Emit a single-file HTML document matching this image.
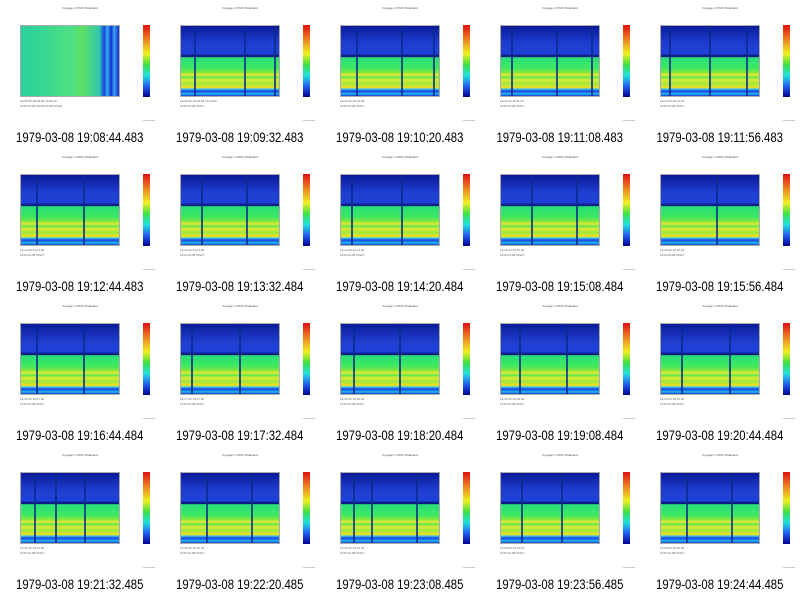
<!DOCTYPE html>
<html><head><meta charset="utf-8"><style>
*{margin:0;padding:0}
body{width:800px;height:596px;background:#fff;position:relative;overflow:hidden;font-family:"Liberation Sans",sans-serif}
.c{position:absolute;width:160px;height:149px}
.t{position:absolute;left:0;top:6px;width:160px;text-align:center;font-size:3px;color:#555}
.p{position:absolute;left:20px;top:25px;width:100px;height:72px;border:1px solid #aaa;box-sizing:border-box;
background:linear-gradient(to bottom,#0a1a9a 0%,#1f3fd0 25%,#1e40d8 40%,#0a1f80 42%,#0a1f80 44%,#28e07a 45%,#3ee860 60%,#7fe840 66%,#e8e830 70%,#5ee850 73%,#e0e830 77%,#9fe840 82%,#f0e020 88%,#3cc8f0 90%,#1a40e0 93%,#1fb8f0 97%,#1a3ad0 100%)}
.p.f{background:linear-gradient(to right,#2ad0a0 0%,#50e080 55%,#60e060 62%,#30c8b0 80%,#1a40e0 85%,#30b0f0 88%,#1030d0 92%,#40a0f0 95%,#1030d0 100%)}
.v{position:absolute;top:0;width:2px;height:100%;background:#0a2a8a;opacity:.8}
.b{position:absolute;left:143px;top:25px;width:7px;height:72px;background:linear-gradient(to bottom,#e01010,#f08020 20%,#f0f020 40%,#40e040 55%,#20e0e0 70%,#2060f0 85%,#000090)}
.x{position:absolute;left:20px;top:99px;width:110px;font-size:3px;color:#666;line-height:5px}
.s{position:absolute;left:143px;top:120px;width:12px;height:1px;background:#ccc}
.l{position:absolute;left:0;top:129px;width:160px;text-align:center;font-size:14px;color:#000;transform:scaleX(0.81);transform-origin:78.5px 0}
</style></head><body>
<div class="c" style="left:0;top:0"><div class="t">Voyager-1 PWS Wideband</div><div class="p f"></div><div class="b"></div><div class="x">18:08:50 18:09:00 18:09:10<br>1979-03-08 19:08:44.483 SCET</div><div class="s"></div><div class="l">1979-03-08 19:08:44.483</div></div>
<div class="c" style="left:160px;top:0"><div class="t">Voyager-1 PWS Wideband</div><div class="p"><div class="v" style="left:13px"></div><div class="v" style="left:63px"></div><div class="v" style="left:93px"></div></div><div class="b"></div><div class="x">19:09:40 19:09:50 19:10:00<br>1979-03-08 SCET</div><div class="s"></div><div class="l">1979-03-08 19:09:32.483</div></div>
<div class="c" style="left:320px;top:0"><div class="t">Voyager-1 PWS Wideband</div><div class="p"><div class="v" style="left:15px"></div><div class="v" style="left:60px"></div><div class="v" style="left:92px"></div></div><div class="b"></div><div class="x">19:10:30 19:10:40<br>1979-03-08 SCET</div><div class="s"></div><div class="l">1979-03-08 19:10:20.483</div></div>
<div class="c" style="left:480px;top:0"><div class="t">Voyager-1 PWS Wideband</div><div class="p"><div class="v" style="left:10px"></div><div class="v" style="left:55px"></div><div class="v" style="left:90px"></div></div><div class="b"></div><div class="x">19:11:10 19:11:20<br>1979-03-08 SCET</div><div class="s"></div><div class="l">1979-03-08 19:11:08.483</div></div>
<div class="c" style="left:640px;top:0"><div class="t">Voyager-1 PWS Wideband</div><div class="p"><div class="v" style="left:8px"></div><div class="v" style="left:48px"></div><div class="v" style="left:85px"></div></div><div class="b"></div><div class="x">19:12:00 19:12:10<br>1979-03-08 SCET</div><div class="s"></div><div class="l">1979-03-08 19:11:56.483</div></div>

<div class="c" style="left:0;top:149px"><div class="t">Voyager-1 PWS Wideband</div><div class="p"><div class="v" style="left:15px"></div><div class="v" style="left:62px"></div></div><div class="b"></div><div class="x">19:12:50 19:13:00<br>1979-03-08 SCET</div><div class="s"></div><div class="l">1979-03-08 19:12:44.483</div></div>
<div class="c" style="left:160px;top:149px"><div class="t">Voyager-1 PWS Wideband</div><div class="p"><div class="v" style="left:20px"></div><div class="v" style="left:65px"></div></div><div class="b"></div><div class="x">19:13:40 19:13:50<br>1979-03-08 SCET</div><div class="s"></div><div class="l">1979-03-08 19:13:32.484</div></div>
<div class="c" style="left:320px;top:149px"><div class="t">Voyager-1 PWS Wideband</div><div class="p"><div class="v" style="left:10px"></div><div class="v" style="left:60px"></div></div><div class="b"></div><div class="x">19:14:30 19:14:40<br>1979-03-08 SCET</div><div class="s"></div><div class="l">1979-03-08 19:14:20.484</div></div>
<div class="c" style="left:480px;top:149px"><div class="t">Voyager-1 PWS Wideband</div><div class="p"><div class="v" style="left:30px"></div><div class="v" style="left:75px"></div></div><div class="b"></div><div class="x">19:15:10 19:15:20<br>1979-03-08 SCET</div><div class="s"></div><div class="l">1979-03-08 19:15:08.484</div></div>
<div class="c" style="left:640px;top:149px"><div class="t">Voyager-1 PWS Wideband</div><div class="p"><div class="v" style="left:55px"></div></div><div class="b"></div><div class="x">19:16:00 19:16:10<br>1979-03-08 SCET</div><div class="s"></div><div class="l">1979-03-08 19:15:56.484</div></div>

<div class="c" style="left:0;top:298px"><div class="t">Voyager-1 PWS Wideband</div><div class="p"><div class="v" style="left:15px"></div><div class="v" style="left:62px"></div></div><div class="b"></div><div class="x">19:16:50 19:17:00<br>1979-03-08 SCET</div><div class="s"></div><div class="l">1979-03-08 19:16:44.484</div></div>
<div class="c" style="left:160px;top:298px"><div class="t">Voyager-1 PWS Wideband</div><div class="p"><div class="v" style="left:10px"></div><div class="v" style="left:58px"></div></div><div class="b"></div><div class="x">19:17:40 19:17:50<br>1979-03-08 SCET</div><div class="s"></div><div class="l">1979-03-08 19:17:32.484</div></div>
<div class="c" style="left:320px;top:298px"><div class="t">Voyager-1 PWS Wideband</div><div class="p"><div class="v" style="left:12px"></div><div class="v" style="left:58px"></div></div><div class="b"></div><div class="x">19:18:30 19:18:40<br>1979-03-08 SCET</div><div class="s"></div><div class="l">1979-03-08 19:18:20.484</div></div>
<div class="c" style="left:480px;top:298px"><div class="t">Voyager-1 PWS Wideband</div><div class="p"><div class="v" style="left:18px"></div><div class="v" style="left:65px"></div></div><div class="b"></div><div class="x">19:19:10 19:19:20<br>1979-03-08 SCET</div><div class="s"></div><div class="l">1979-03-08 19:19:08.484</div></div>
<div class="c" style="left:640px;top:298px"><div class="t">Voyager-1 PWS Wideband</div><div class="p"><div class="v" style="left:20px"></div><div class="v" style="left:68px"></div></div><div class="b"></div><div class="x">19:20:50 19:21:00<br>1979-03-08 SCET</div><div class="s"></div><div class="l">1979-03-08 19:20:44.484</div></div>

<div class="c" style="left:0;top:447px"><div class="t">Voyager-1 PWS Wideband</div><div class="p"><div class="v" style="left:13px"></div><div class="v" style="left:34px"></div><div class="v" style="left:63px"></div></div><div class="b"></div><div class="x">19:21:40 19:21:50<br>1979-03-08 SCET</div><div class="s"></div><div class="l">1979-03-08 19:21:32.485</div></div>
<div class="c" style="left:160px;top:447px"><div class="t">Voyager-1 PWS Wideband</div><div class="p"><div class="v" style="left:25px"></div><div class="v" style="left:70px"></div></div><div class="b"></div><div class="x">19:22:30 19:22:40<br>1979-03-08 SCET</div><div class="s"></div><div class="l">1979-03-08 19:22:20.485</div></div>
<div class="c" style="left:320px;top:447px"><div class="t">Voyager-1 PWS Wideband</div><div class="p"><div class="v" style="left:12px"></div><div class="v" style="left:30px"></div><div class="v" style="left:75px"></div></div><div class="b"></div><div class="x">19:23:10 19:23:20<br>1979-03-08 SCET</div><div class="s"></div><div class="l">1979-03-08 19:23:08.485</div></div>
<div class="c" style="left:480px;top:447px"><div class="t">Voyager-1 PWS Wideband</div><div class="p"><div class="v" style="left:20px"></div><div class="v" style="left:60px"></div></div><div class="b"></div><div class="x">19:24:00 19:24:10<br>1979-03-08 SCET</div><div class="s"></div><div class="l">1979-03-08 19:23:56.485</div></div>
<div class="c" style="left:640px;top:447px"><div class="t">Voyager-1 PWS Wideband</div><div class="p"><div class="v" style="left:25px"></div><div class="v" style="left:70px"></div></div><div class="b"></div><div class="x">19:24:50 19:25:00<br>1979-03-08 SCET</div><div class="s"></div><div class="l">1979-03-08 19:24:44.485</div></div>
</body></html>
